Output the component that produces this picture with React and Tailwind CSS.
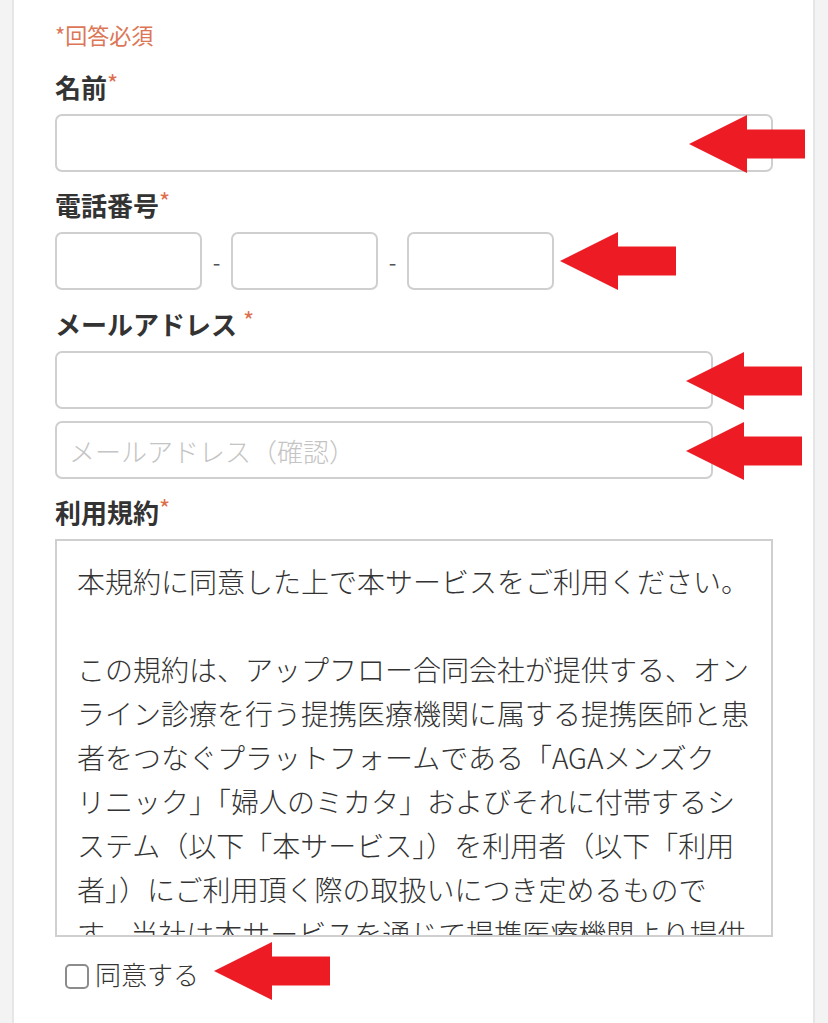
import React from "react";

const FONT = { fontFamily: '"Noto Sans CJK JP", "Noto Sans", sans-serif' };

// red pointer drawn over the form
const Arrow = ({ className }) => (
  <svg
    className={`absolute ${className}`}
    width="116"
    height="58"
    viewBox="0 0 116 58"
  >
    <polygon points="0,29 58,0 58,14.5 116,14.5 116,43.5 58,43.5 58,58" fill="#ed1c24" />
  </svg>
);

const Label = ({ children, spaced }) => (
  <div className="text-[26px] leading-[36px] font-bold text-[#333] mb-[9px]">
    {children}
    {spaced && " "}
    <span className="text-[24px] align-top relative top-[-4px] font-normal text-[#dd6e4e]">*</span>
  </div>
);

const termsLines = [
  "本規約に同意した上で本サービスをご利用ください。",
  "",
  "この規約は、アップフロー合同会社が提供する、オン",
  "ライン診療を行う提携医療機関に属する提携医師と患",
  "者をつなぐプラットフォームである「AGAメンズク",
  "リニック」「婦人のミカタ」およびそれに付帯するシ",
  "ステム（以下「本サービス」）を利用者（以下「利用",
  "者」）にご利用頂く際の取扱いにつき定めるもので",
  "す。当社は本サービスを通じて提携医療機関より提供",
];

const inputCls = "block h-[58px] border-2 border-[#cfcfcf] rounded-[7px] bg-white outline-none";

export default function App() {
  return (
    <div className="min-h-screen bg-[#f3f3f3]" style={FONT}>
      <div className="ml-[12px] w-[803px] min-h-[1023px] bg-white border-x-2 border-[#e6e6e6] pl-[41px] pr-[40px] pt-[17px]">
        <div className="text-[22px] leading-[34px] text-[#dc7656]">*回答必須</div>

        {/* 名前 */}
        <div className="mt-[18px]">
          <Label>名前</Label>
          <div className="relative">
            <input className={`${inputCls} w-[718px]`} />
            <Arrow className="left-[634px] top-px" />
          </div>
        </div>

        {/* 電話番号 */}
        <div className="mt-[15px]">
          <Label>電話番号</Label>
          <div className="relative flex items-center">
            <input className={`${inputCls} w-[147px]`} />
            <span className="w-[29px] text-center text-[22px] text-[#555]">-</span>
            <input className={`${inputCls} w-[147px]`} />
            <span className="w-[29px] text-center text-[22px] text-[#555]">-</span>
            <input className={`${inputCls} w-[147px]`} />
            <Arrow className="left-[505px] top-0" />
          </div>
        </div>

        {/* メールアドレス */}
        <div className="mt-[16px]">
          <Label spaced>メールアドレス</Label>
          <div className="relative">
            <input className={`${inputCls} w-[658px]`} />
            <Arrow className="left-[631px] top-px" />
          </div>
          <div className="relative mt-[12px]">
            <input
              placeholder="メールアドレス（確認）"
              className={`${inputCls} w-[658px] pl-[12px] text-[26px] font-light placeholder:text-[#c4c4c4]`}
              style={FONT}
            />
            <Arrow className="left-[631px] top-px" />
          </div>
        </div>

        {/* 利用規約 */}
        <div className="mt-[15px]">
          <Label>利用規約</Label>
          <div className="w-[718px] h-[398px] border-2 border-[#cfcfcf] overflow-hidden pl-[20px] pt-[18px]">
            {termsLines.map((line, i) => (
              <div key={i} className="text-[28px] leading-[44px] h-[44px] font-light text-[#333] whitespace-nowrap">
                {line}
              </div>
            ))}
          </div>
        </div>

        {/* 同意する */}
        <div className="relative mt-[19px] flex items-center pl-[10px] h-[36px]">
          <span className="w-[24px] h-[25px] border-[2.5px] border-[#8c8c8c] rounded-[5px] mr-[6px] mt-[4px]" />
          <span className="text-[26px] leading-[36px] font-light text-[#333]">同意する</span>
          <Arrow className="left-[159px] top-[-14px]" />
        </div>
      </div>
    </div>
  );
}
